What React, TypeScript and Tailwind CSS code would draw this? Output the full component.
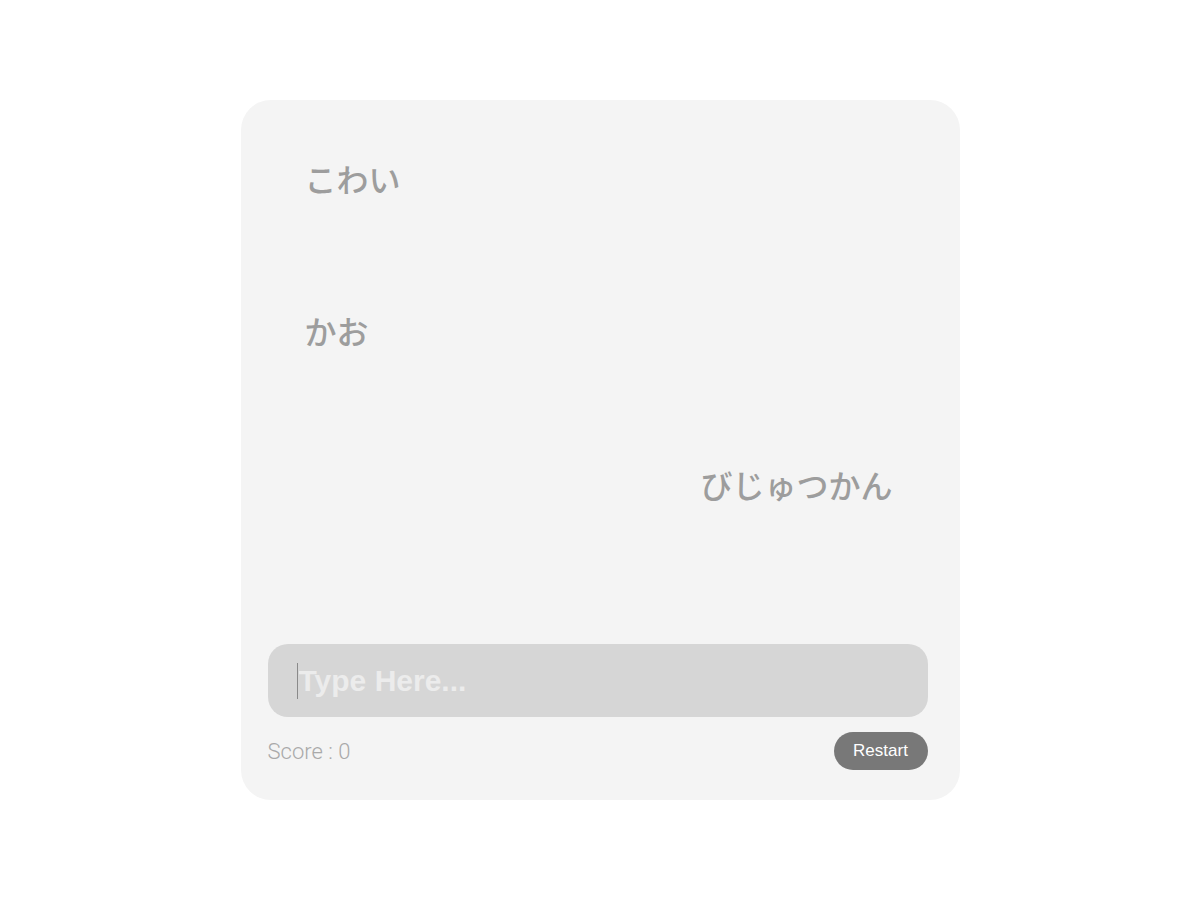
const words = [
  { text: "こわい", left: "left-[37px]", top: "top-[62px]" },
  { text: "かお", left: "left-[37px]", top: "top-[214px]" },
  { text: "びじゅつかん", left: "left-[433px]", top: "top-[368px]" },
]

const App = () => {
  return (
    <div className="min-h-[900px] bg-white pt-[100px]" style={{ fontFamily: '"Liberation Sans", Arial, sans-serif' }}>
      <div className="mx-auto flex h-[700px] w-[719px] flex-col rounded-[30px] bg-[#f4f4f4] pb-[30px] pl-[27px] pr-[32px]">
        <div className="relative flex-1">
          {words.map((w) => (
            <p
              key={w.text}
              className={`absolute ${w.left} ${w.top} text-[32px] font-medium leading-none text-[#9d9d9d]`}
              style={{ fontFamily: '"Noto Sans CJK JP", "Noto Sans", sans-serif' }}
            >
              {w.text}
            </p>
          ))}
        </div>
        <div className="relative">
          <input
            className="h-[73px] w-full rounded-[20px] bg-[#d6d6d6] pl-[31px] text-[30px] font-bold text-[#555] caret-transparent outline-none placeholder:text-[#ececec]"
            placeholder="Type Here..."
          />
          <span className="absolute left-[29px] top-[19px] h-[36px] w-px bg-[#8a8a8a]" />
        </div>
        <div className="mt-[15px] flex h-[38px] items-center justify-between">
          <p className="text-[22px] font-light text-[#a9a9a9]" style={{ fontFamily: 'Roboto, "Liberation Sans", sans-serif' }}>
            Score : 0
          </p>
          <button className="h-[38px] w-[94px] rounded-full bg-[#787878] text-[17px] text-white">Restart</button>
        </div>
      </div>
    </div>
  )
}

export default App
